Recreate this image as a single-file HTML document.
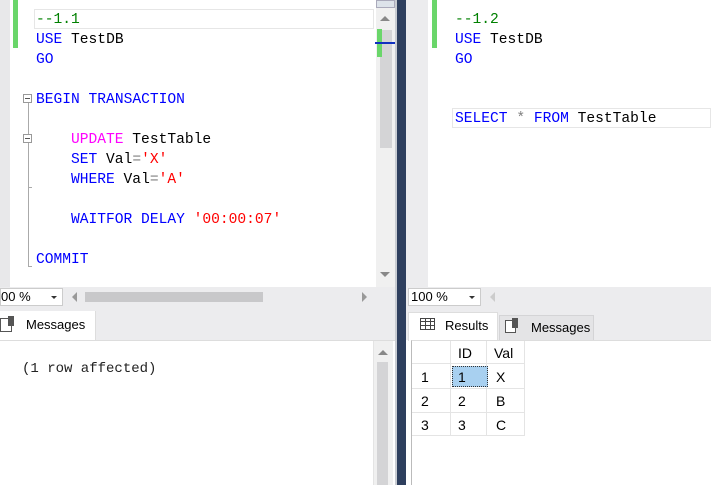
<!DOCTYPE html>
<html><head><style>
*{margin:0;padding:0;box-sizing:border-box}
body{width:711px;height:485px;position:relative;overflow:hidden;background:#fff;font-family:"Liberation Sans",sans-serif}
.a{position:absolute}
.code{font-family:"Liberation Mono",monospace;font-size:14.6px;line-height:20px;white-space:pre;color:#000}
.k{color:#0000ff}.p{color:#ff00ff}.s{color:#ff0000}.c{color:#008000}.g{color:#808080}
.ui{font-size:13px;color:#000}
</style></head><body>
<!-- left editor -->
<div class="a" style="left:0;top:0;width:10px;height:287px;background:#e8e8ea"></div>
<div class="a" style="left:13px;top:0;width:5px;height:48px;background:#6ad66a"></div>
<div class="a" style="left:34px;top:9px;width:340px;height:20px;border:1px solid #e6e6e6"></div>
<div class="a code" style="left:36px;top:10px"><span class="c">--1.1</span></div>
<div class="a code" style="left:36px;top:30px"><span class="k">USE</span> TestDB</div>
<div class="a code" style="left:36px;top:50px"><span class="k">GO</span></div>
<div class="a code" style="left:36px;top:90px"><span class="k">BEGIN TRANSACTION</span></div>
<div class="a code" style="left:71px;top:130px"><span class="p">UPDATE</span> TestTable</div>
<div class="a code" style="left:71px;top:150px"><span class="k">SET</span> Val<span class="g">=</span><span class="s">'X'</span></div>
<div class="a code" style="left:71px;top:170px"><span class="k">WHERE</span> Val<span class="g">=</span><span class="s">'A'</span></div>
<div class="a code" style="left:71px;top:210px"><span class="k">WAITFOR DELAY</span> <span class="s">'00:00:07'</span></div>
<div class="a code" style="left:36px;top:250px"><span class="k">COMMIT</span></div>
<!-- outline markers -->
<div class="a" style="left:23px;top:94px;width:9px;height:9px;border:1px solid #999;background:#fff"><div class="a" style="left:1px;top:3px;width:5px;height:1px;background:#555"></div></div>
<div class="a" style="left:28px;top:103px;width:1px;height:163px;background:#aaa"></div>
<div class="a" style="left:23px;top:134px;width:9px;height:9px;border:1px solid #999;background:#fff"><div class="a" style="left:1px;top:3px;width:5px;height:1px;background:#555"></div></div>
<div class="a" style="left:28px;top:187px;width:4px;height:1px;background:#aaa"></div>
<div class="a" style="left:28px;top:266px;width:4px;height:1px;background:#aaa"></div>
<!-- left vscroll -->
<div class="a" style="left:376px;top:0;width:19px;height:287px;background:#f0f0f0"></div>
<div class="a" style="left:376px;top:0;width:19px;height:8px;background:#dde3ea;border:1px solid #aab"></div>
<div class="a" style="left:380px;top:16px;width:0;height:0;border-left:5px solid transparent;border-right:5px solid transparent;border-bottom:5px solid #888"></div>
<div class="a" style="left:380px;top:30px;width:12px;height:118px;background:#d4d4d6"></div>
<div class="a" style="left:377px;top:29px;width:5px;height:28px;background:#6ad66a"></div>
<div class="a" style="left:375px;top:42px;width:22px;height:2px;background:#1030c0"></div>
<div class="a" style="left:380px;top:272px;width:0;height:0;border-left:5px solid transparent;border-right:5px solid transparent;border-top:5px solid #888"></div>
<!-- left zoom row -->
<div class="a" style="left:0;top:287px;width:397px;height:20px;background:#ececee"></div>
<div class="a ui" style="left:0;top:288px;width:63px;height:18px;background:#fff;border:1px solid #ccc;line-height:16px;padding-left:0">00 %<span class="a" style="left:50px;top:7px;border-left:3px solid transparent;border-right:3px solid transparent;border-top:3px solid #333"></span></div>
<div class="a" style="left:72px;top:292px;border-top:5px solid transparent;border-bottom:5px solid transparent;border-right:5px solid #999"></div>
<div class="a" style="left:85px;top:292px;width:178px;height:10px;background:#c8c8ca"></div>
<div class="a" style="left:362px;top:292px;border-top:5px solid transparent;border-bottom:5px solid transparent;border-left:5px solid #999"></div>
<!-- left tab strip -->
<div class="a" style="left:0;top:307px;width:397px;height:33px;background:#ececee"></div>
<div class="a" style="left:0;top:311px;width:96px;height:30px;background:#fff;border-right:1px solid #ddd"></div>
<div class="a" style="left:0;top:318px;width:12px;height:14px;border:1px solid #555;background:#fff"></div>
<div class="a" style="left:8px;top:316px;width:6px;height:10px;background:#555"></div>
<div class="a ui" style="left:26px;top:317px;font-size:13px">Messages</div>
<div class="a" style="left:0;top:340px;width:397px;height:1px;background:#ddd"></div>
<div class="a code" style="left:22px;top:359px;font-size:14px;color:#222">(1 row affected)</div>
<div class="a" style="left:373px;top:341px;width:20px;height:144px;background:#f0f0f0;border-left:1px solid #e4e4e4"></div>
<div class="a" style="left:378px;top:350px;border-left:5px solid transparent;border-right:5px solid transparent;border-bottom:5px solid #888"></div>
<div class="a" style="left:377px;top:362px;width:11px;height:123px;background:#d4d4d6"></div>
<!-- splitter -->
<div class="a" style="left:395px;top:0;width:2px;height:485px;background:#c8ccd2"></div>
<div class="a" style="left:397px;top:0;width:9px;height:485px;background:#2e3f5e"></div>
<!-- right editor -->
<div class="a" style="left:406px;top:0;width:22px;height:287px;background:#ececee"></div>
<div class="a" style="left:432px;top:0;width:5px;height:48px;background:#6ad66a"></div>
<div class="a code" style="left:455px;top:10px"><span class="c">--1.2</span></div>
<div class="a code" style="left:455px;top:30px"><span class="k">USE</span> TestDB</div>
<div class="a code" style="left:455px;top:50px"><span class="k">GO</span></div>
<div class="a" style="left:452px;top:108px;width:259px;height:20px;border:1px solid #e6e6e6"></div>
<div class="a code" style="left:455px;top:109px"><span class="k">SELECT</span> <span class="g">*</span> <span class="k">FROM</span> TestTable</div>
<!-- right zoom row -->
<div class="a" style="left:406px;top:287px;width:305px;height:20px;background:#ececee"></div>
<div class="a ui" style="left:408px;top:288px;width:73px;height:18px;background:#fff;border:1px solid #ccc;line-height:16px;padding-left:2px">100 %<span class="a" style="left:60px;top:7px;border-left:3px solid transparent;border-right:3px solid transparent;border-top:3px solid #333"></span></div>
<div class="a" style="left:490px;top:292px;border-top:5px solid transparent;border-bottom:5px solid transparent;border-right:5px solid #ccc"></div>
<!-- right tabs -->
<div class="a" style="left:406px;top:307px;width:305px;height:33px;background:#ececee"></div>
<div class="a" style="left:408px;top:312px;width:90px;height:29px;background:#fff;border:1px solid #ddd;border-bottom:none"></div>
<div class="a" style="left:420px;top:318px;width:15px;height:12px;border:1px solid #444;background:repeating-linear-gradient(90deg,transparent 0 4px,#444 4px 5px),repeating-linear-gradient(0deg,transparent 0 3px,#444 3px 4px)"></div>
<div class="a ui" style="left:445px;top:318px">Results</div>
<div class="a" style="left:499px;top:315px;width:95px;height:25px;background:#e4e4e6;border:1px solid #d4d4d6;border-bottom:none"></div>
<div class="a" style="left:505px;top:320px;width:11px;height:13px;border:1px solid #555;background:#fff"></div>
<div class="a" style="left:512px;top:318px;width:6px;height:10px;background:#555"></div>
<div class="a ui" style="left:531px;top:320px">Messages</div>
<div class="a" style="left:411px;top:340px;width:300px;height:145px;border-left:1px solid #bbb;border-top:1px solid #ddd;background:#fff"></div>
<!-- grid -->
<div class="a" style="left:412px;top:341px;width:113px;height:95px">
<div class="a" style="left:0;top:0;width:113px;height:23px;border-bottom:1px solid #e4e4e4"></div>
<div class="a" style="left:38px;top:0;width:1px;height:95px;background:#e4e4e4"></div>
<div class="a" style="left:74px;top:0;width:1px;height:95px;background:#e4e4e4"></div>
<div class="a" style="left:112px;top:0;width:1px;height:95px;background:#e4e4e4"></div>
<div class="a" style="left:0;top:47px;width:113px;height:1px;background:#e4e4e4"></div>
<div class="a" style="left:0;top:71px;width:113px;height:1px;background:#e4e4e4"></div>
<div class="a" style="left:0;top:94px;width:113px;height:1px;background:#e4e4e4"></div>
<div class="a" style="left:40px;top:25px;width:36px;height:21px;background:#a8d0f0;border:1px dotted #333"></div>
<div class="a ui" style="left:46px;top:4px;font-size:14px">ID</div>
<div class="a ui" style="left:82px;top:4px;font-size:14px">Val</div>
<div class="a ui" style="left:9px;top:28px;font-size:14px">1</div>
<div class="a ui" style="left:9px;top:52px;font-size:14px">2</div>
<div class="a ui" style="left:9px;top:76px;font-size:14px">3</div>
<div class="a ui" style="left:46px;top:28px;font-size:14px">1</div>
<div class="a ui" style="left:46px;top:52px;font-size:14px">2</div>
<div class="a ui" style="left:46px;top:76px;font-size:14px">3</div>
<div class="a ui" style="left:84px;top:28px;font-size:14px">X</div>
<div class="a ui" style="left:84px;top:52px;font-size:14px">B</div>
<div class="a ui" style="left:84px;top:76px;font-size:14px">C</div>
</div>
</body></html>
